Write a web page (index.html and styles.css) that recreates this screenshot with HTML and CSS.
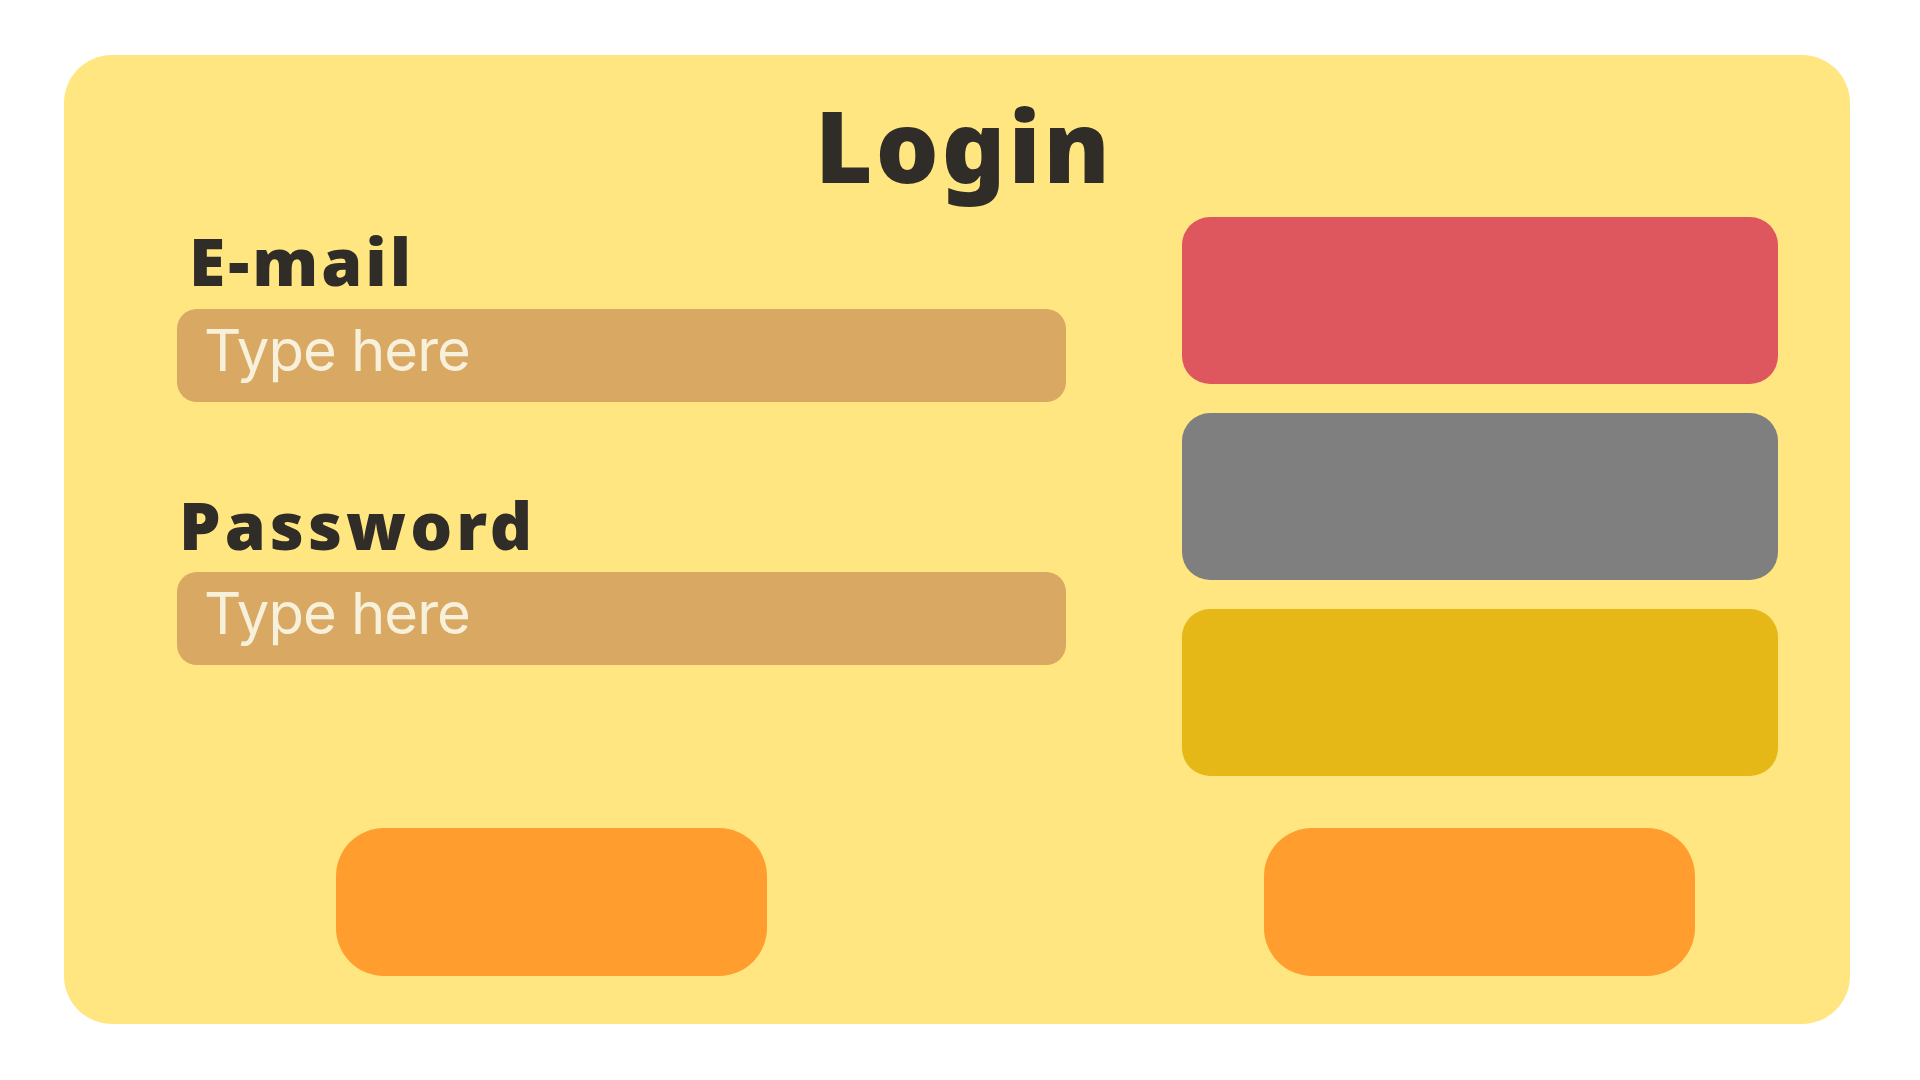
FILE: index.html
```html
<!DOCTYPE html>
<html lang="en">
<head>
<meta charset="utf-8">
<title>Login</title>
<link rel="stylesheet" href="styles.css">
</head>
<body>
<div class="card">
  <h1 class="title">Login</h1>
  <div class="main">
    <div class="form">
      <label class="label label-email">E-mail</label>
      <div class="input">Type here</div>
      <label class="label label-password">Password</label>
      <div class="input">Type here</div>
    </div>
    <div class="swatches">
      <div class="swatch swatch-red"></div>
      <div class="swatch swatch-gray"></div>
      <div class="swatch swatch-yellow"></div>
    </div>
  </div>
  <div class="actions">
    <div class="btn"></div>
    <div class="btn"></div>
  </div>
</div>
</body>
</html>
```

FILE: styles.css
```css
html, body {
  margin: 0;
  padding: 0;
  background: #ffffff;
}

body {
  width: 1920px;
  height: 1080px;
  overflow: hidden;
}

.card {
  box-sizing: border-box;
  margin: 55px 70px 0 64px;
  width: 1786px;
  height: 969px;
  border-radius: 48px;
  background: #ffe680;
  display: flex;
  flex-direction: column;
}

.title {
  margin: 0 0 23px 0;
  padding: 40px 0 0 14px;
  font-family: "Noto Sans", "DejaVu Sans", sans-serif;
  font-weight: 900;
  font-size: 99px;
  line-height: 99px;
  letter-spacing: 3px;
  text-align: center;
  color: #302d29;
}

.main {
  display: grid;
  grid-template-columns: 889px 596px;
  column-gap: 116px;
  padding-left: 113px;
}

.form {
  display: flex;
  flex-direction: column;
}

.label {
  display: block;
  font-family: "Noto Sans", "DejaVu Sans", sans-serif;
  font-weight: 900;
  font-size: 66px;
  line-height: 66px;
  letter-spacing: 3px;
  color: #302d29;
}

.label-email {
  margin: 10px 0 16px 12px;
  letter-spacing: 3px;
}

.label-password {
  margin: 89px 0 15px 2px;
  letter-spacing: 4px;
}

.input {
  box-sizing: border-box;
  height: 93px;
  border-radius: 20px;
  background: #d9a862;
  padding: 0 0 10px 27px;
  font-family: Inter, "Liberation Sans", sans-serif;
  font-weight: 400;
  font-size: 58px;
  line-height: 83px;
  letter-spacing: -1px;
  color: #f7f0da;
}

.swatches {
  display: flex;
  flex-direction: column;
  gap: 29px;
}

.swatch {
  height: 167px;
  border-radius: 28px;
}

.swatch-red { background: #df575e; }
.swatch-gray { background: #7f7f7f; }
.swatch-yellow { background: #e5b817; }

.actions {
  display: flex;
  gap: 497px;
  padding-left: 272px;
  margin-top: 52px;
}

.btn {
  width: 431px;
  height: 148px;
  border-radius: 48px;
  background: #ff9d2f;
}
```
